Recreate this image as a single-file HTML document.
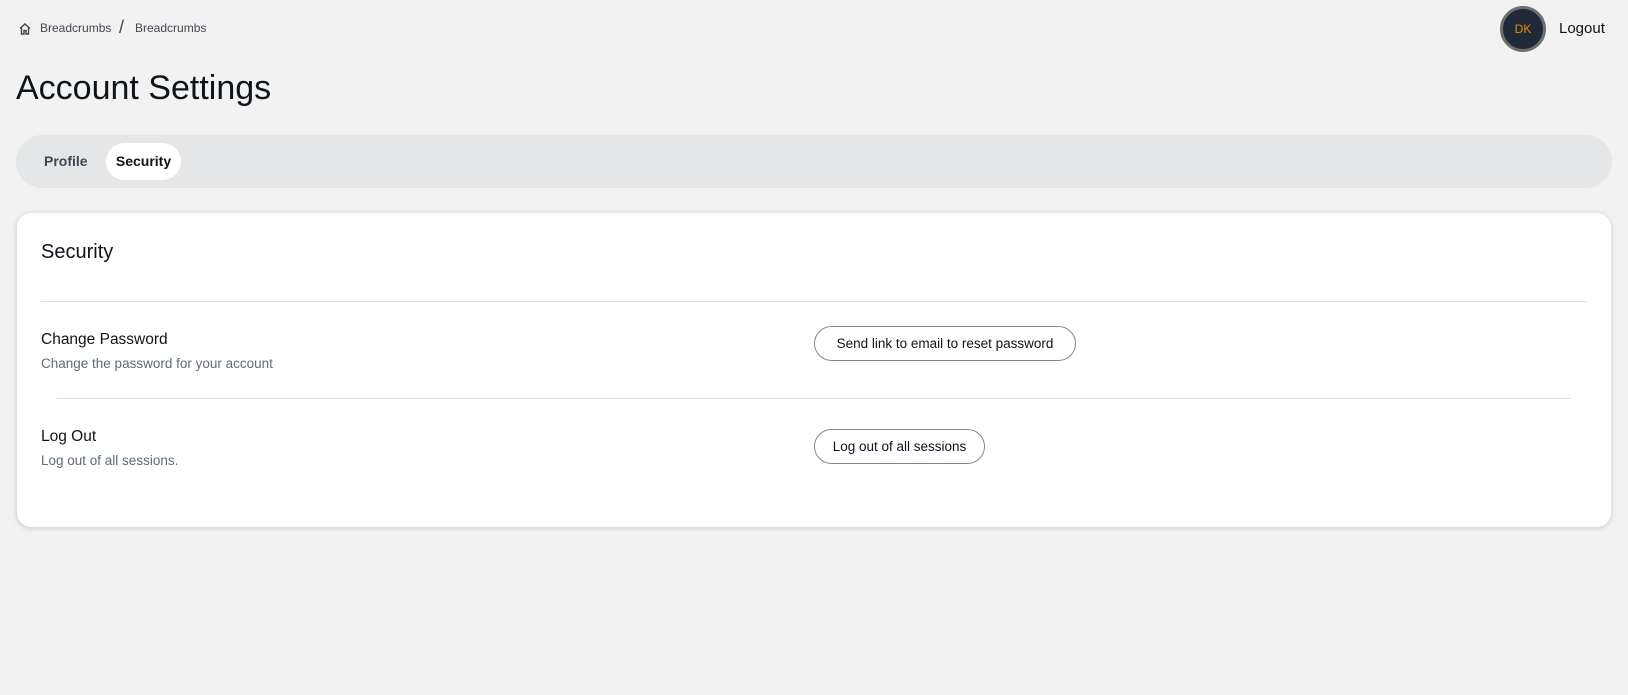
<!DOCTYPE html>
<html><head><meta charset="utf-8"><style>
*{box-sizing:border-box;margin:0;padding:0}
body{width:1628px;height:695px;background:#f2f2f2;font-family:"Liberation Sans","DejaVu Sans",sans-serif;color:#0f141a;position:relative;overflow:hidden}
.abs{position:absolute;white-space:nowrap}
.bc{font-size:12px;color:#424650}
.card{position:absolute;left:17px;top:213px;width:1594px;height:314px;background:#fff;border-radius:14px;box-shadow:0 1px 6px rgba(0,0,0,.18)}
.btn{position:absolute;height:35px;border:1px solid #7d8998;border-radius:18px;font-size:14px;line-height:33px;padding:0 15px;color:#0f141a;background:#fff;text-align:center}
.sep{position:absolute;height:1px;background:#dfe1e6}
</style></head><body>
<svg class="abs" style="left:18px;top:22px" width="14" height="14" viewBox="0 0 14 14" fill="none" stroke="#424650" stroke-width="1.4"><path d="M2 6.5L7 2l5 4.5M3.5 5.5V12h2.5V8.5h2V12h2.5V5.5"/></svg>
<div class="abs bc" style="left:40px;top:21px">Breadcrumbs</div>
<div class="abs" style="left:119px;top:17px;font-size:18px;color:#424650">/</div>
<div class="abs bc" style="left:135px;top:21px">Breadcrumbs</div>
<div class="abs" style="left:1500px;top:6px;width:46px;height:46px;border-radius:50%;background:#1f2937;border:3px solid #6b6e73;color:#ec8a06;font-size:12px;line-height:40px;text-align:center">DK</div>
<div class="abs" style="left:1559px;top:20px;font-size:15px;color:#0f141a">Logout</div>
<div class="abs" style="left:16px;top:69px;font-size:34px;color:#0f141a">Account Settings</div>
<div class="abs" style="left:16px;top:135px;width:1596px;height:53px;background:#e5e6e8;border-radius:27px"></div>
<div class="abs" style="left:44px;top:153px;font-size:14px;font-weight:bold;color:#424650">Profile</div>
<div class="abs" style="left:106px;top:143px;width:75px;height:37px;background:#fff;border-radius:19px;font-size:14px;font-weight:bold;line-height:37px;text-align:center">Security</div>
<div class="card"></div>
<div class="abs" style="left:41px;top:241px;font-size:20px">Security</div>
<div class="sep" style="left:41px;top:301px;width:1546px"></div>
<div class="abs" style="left:41px;top:331px;font-size:15.5px">Change Password</div>
<div class="abs" style="left:41px;top:356px;font-size:13.5px;color:#5f6b7a">Change the password for your account</div>
<div class="btn" style="left:814px;top:326px;width:262px;font-size:13.5px">Send link to email to reset password</div>
<div class="sep" style="left:57px;top:398px;width:1514px"></div>
<div class="abs" style="left:41px;top:428px;font-size:15.5px">Log Out</div>
<div class="abs" style="left:41px;top:453px;font-size:13.5px;color:#5f6b7a">Log out of all sessions.</div>
<div class="btn" style="left:814px;top:429px;width:171px;font-size:13.5px">Log out of all sessions</div>
</body></html>
